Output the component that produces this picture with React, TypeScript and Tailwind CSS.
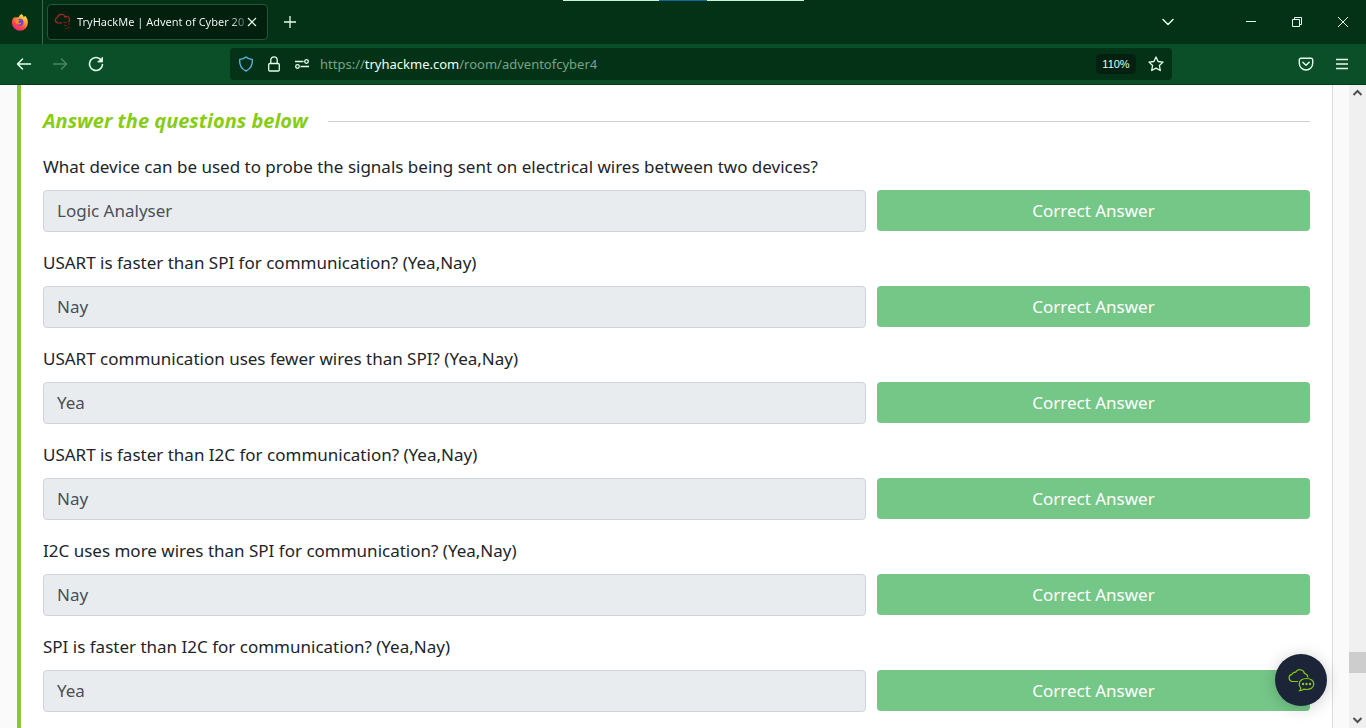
import { ChevronDown } from 'lucide-react';

const questions = [
  {
    text: 'What device can be used to probe the signals being sent on electrical wires between two devices?',
    answer: 'Logic Analyser',
  },
  { text: 'USART is faster than SPI for communication? (Yea,Nay)', answer: 'Nay' },
  { text: 'USART communication uses fewer wires than SPI? (Yea,Nay)', answer: 'Yea' },
  { text: 'USART is faster than I2C for communication? (Yea,Nay)', answer: 'Nay' },
  { text: 'I2C uses more wires than SPI for communication? (Yea,Nay)', answer: 'Nay' },
  { text: 'SPI is faster than I2C for communication? (Yea,Nay)', answer: 'Yea' },
];

function FirefoxLogo() {
  return (
    <svg width="18" height="18" viewBox="0 0 18 18" aria-hidden="true">
      <defs>
        <linearGradient id="flame" x1="0.8" y1="0" x2="0.2" y2="1">
          <stop offset="0" stopColor="#fff34f" />
          <stop offset="0.35" stopColor="#ffa22c" />
          <stop offset="0.65" stopColor="#ff4a45" />
          <stop offset="1" stopColor="#e3247f" />
        </linearGradient>
      </defs>
      <path
        d="M10.5 1c1.2 1 2 2 2.2 3 .7-.1 1.2-.8 1.3-1.2 2 2 3 4 2.8 7A7.9 7.9 0 0 1 1 10c-.1-2.2.4-4 1.6-5.6l.2 1 1.2-2 .6 1.5c1-.5 2-.6 3-.5C8 3 9 1.7 10.5 1z"
        fill="url(#flame)"
      />
      <circle cx="9" cy="9.3" r="3.5" fill="#7542d8" />
      <path d="M4.5 7c1.5-1 3-.8 4.5.4-1 .2-1.7.8-1.7 1.5 0 1.2 2 1.6 3.3.6-.3 2.2-4.6 3-5.8 0-.3-.8-.4-1.7-.3-2.5z" fill="#ff8a2c" />
    </svg>
  );
}

function CloudFavicon() {
  return (
    <svg width="18" height="18" viewBox="0 0 18 18" fill="none" stroke="#a42a28" strokeWidth="1.2" aria-hidden="true">
      <path d="M8 10H4a2.8 2.8 0 0 1-.4-5.5A3.8 3.8 0 0 1 11 4a3 3 0 0 1 4.5 3.3c-.2.7-.6 1.2-1.2 1.7" />
      <path d="M9.5 9.5h3M14 11h2M10 12.5h2.5M13.5 14.5h2M11 15.5h1.5" strokeWidth="1" stroke="#7a2320" />
    </svg>
  );
}

function TabBar() {
  return (
    <header className="relative flex h-11 items-center bg-[#033217] text-[#e6ffee]">
      {/* thin indicator strip on the top edge */}
      <div className="absolute left-[563px] top-0 flex h-px">
        <span className="w-24 bg-[#c9f5dc]" />
        <span className="w-12 bg-[#0f6b9c]" />
        <span className="w-[97px] bg-[#c9f5dc]" />
      </div>
      <div className="flex h-full w-[43px] items-center justify-center border-r border-[#3c6b4c] pr-[2px]">
        <FirefoxLogo />
      </div>
      <div className="ml-1 flex h-9 w-[221px] items-center rounded border border-[#1f5a38] bg-[#03200f] pl-[6px] pr-[10px]">
        <CloudFavicon />
        <span className="ml-[5px] flex-1 whitespace-nowrap bg-linear-to-r from-white from-90% to-white/20 bg-clip-text pt-px text-[11px] text-transparent">
          TryHackMe | Advent of Cyber 20
        </span>
        <button aria-label="Close tab">
          <svg width="10" height="10" viewBox="0 0 10 10" stroke="currentColor" strokeWidth="1.2">
            <path d="M1 1l8 8M9 1L1 9" />
          </svg>
        </button>
      </div>
      <button aria-label="New tab" className="ml-4">
        <svg width="12" height="12" viewBox="0 0 12 12" stroke="currentColor" strokeWidth="1.3">
          <path d="M6 0v12M0 6h12" />
        </svg>
      </button>
      <div className="ml-auto flex items-center pr-[18px]">
        <button aria-label="List all tabs" className="mr-[68px]">
          <ChevronDown size={20} strokeWidth={1.8} />
        </button>
        <button aria-label="Minimize" className="mr-9">
          <svg width="10" height="10" viewBox="0 0 10 10" stroke="currentColor">
            <path d="M0 4.5h10" />
          </svg>
        </button>
        <button aria-label="Restore" className="mr-9">
          <svg width="10" height="10" viewBox="0 0 10 10" fill="none" stroke="currentColor">
            <path d="M.5 2.5h7v7h-7zM2.5 2.5v-2h7v7h-2" />
          </svg>
        </button>
        <button aria-label="Close window">
          <svg width="10" height="10" viewBox="0 0 10 10" stroke="currentColor">
            <path d="M0 0l10 10M10 0L0 10" />
          </svg>
        </button>
      </div>
    </header>
  );
}

function Toolbar() {
  return (
    <nav className="flex h-[41px] items-center border-b border-[#053a1b] bg-[#0a4f28] px-4 text-[#e6ffee]">
      <div className="flex w-[214px] shrink-0 items-center gap-5">
        <button aria-label="Back">
          <svg width="16" height="16" viewBox="0 0 16 16" fill="none" stroke="currentColor" strokeWidth="1.5" strokeLinecap="round" strokeLinejoin="round">
            <path d="M14.5 8h-13M6.5 3L1.5 8l5 5" />
          </svg>
        </button>
        <button aria-label="Forward" className="text-[#4b8562]" disabled>
          <svg width="16" height="16" viewBox="0 0 16 16" fill="none" stroke="currentColor" strokeWidth="1.5" strokeLinecap="round" strokeLinejoin="round">
            <path d="M1.5 8h13M9.5 3l5 5-5 5" />
          </svg>
        </button>
        <button aria-label="Reload">
          <svg width="16" height="16" viewBox="0 0 16 16" fill="none" stroke="currentColor" strokeWidth="1.6" strokeLinecap="round">
            <path d="M13.5 4.5A6.5 6.5 0 1 0 14.5 8.5" />
            <path d="M14.5 1.5V6H10z" fill="currentColor" strokeWidth="0.8" />
          </svg>
        </button>
      </div>
      <div className="mr-[126px] flex h-8 flex-1 items-center rounded bg-[#033217] px-2">
        <svg width="16" height="16" viewBox="0 0 16 16" fill="none" stroke="#5fb0dd" strokeWidth="1.4" strokeLinejoin="round" aria-hidden="true">
          <path d="M8 1c1.5 1.4 3.7 2.2 6.3 2.4.5 5.2-1.5 9.4-6.3 11.6C3.2 12.8 1.2 8.6 1.7 3.4 4.3 3.2 6.5 2.4 8 1z" />
        </svg>
        <svg className="ml-3" width="16" height="16" viewBox="0 0 16 16" fill="none" stroke="currentColor" strokeWidth="1.3" aria-hidden="true">
          <rect x="2.7" y="7.5" width="10.6" height="7.5" rx="1.2" />
          <path d="M4.8 7.5V4a3.2 3.2 0 0 1 6.4 0v3.5" />
        </svg>
        <svg className="ml-3" width="16" height="16" viewBox="0 0 16 16" fill="none" stroke="currentColor" strokeWidth="1.3" aria-hidden="true">
          <path d="M1 5.5h8.5M6.5 10.5H15" />
          <circle cx="12.5" cy="5.5" r="1.8" />
          <circle cx="3.5" cy="10.5" r="1.8" />
        </svg>
        <a href="#top" className="ml-[10px] pt-[2px] text-[13px] text-[#79a387]">
          https://<span className="text-[#effff4]">tryhackme.com</span>/room/adventofcyber4
        </a>
        <button className="ml-auto h-5 w-10 rounded-sm bg-[#032010] text-center font-['Liberation_Sans'] text-[11px]">110%</button>
        <button aria-label="Bookmark this page" className="ml-3">
          <svg width="16" height="16" viewBox="0 0 16 16" fill="none" stroke="currentColor" strokeWidth="1.3" strokeLinejoin="round">
            <path d="M8 1l2.1 4.5 4.9.6-3.6 3.4.9 5L8 12.1l-4.3 2.4.9-5L1 6.1l4.9-.6z" />
          </svg>
        </button>
      </div>
      <button aria-label="Save to Pocket">
        <svg width="16" height="16" viewBox="0 0 16 16" fill="none" stroke="currentColor" strokeWidth="1.4" strokeLinecap="round" strokeLinejoin="round">
          <path d="M3 2.2h10A1.7 1.7 0 0 1 14.7 4v3.3a6.7 6.7 0 0 1-13.4 0V4A1.7 1.7 0 0 1 3 2.2z" />
          <path d="M4.8 6.3L8 9.3l3.2-3" />
        </svg>
      </button>
      <button aria-label="Menu" className="ml-5">
        <svg width="16" height="16" viewBox="0 0 16 16" stroke="currentColor" strokeWidth="1.3">
          <path d="M2 3.5h12M2 8h12M2 12.5h12" />
        </svg>
      </button>
    </nav>
  );
}

function Scrollbar() {
  return (
    <div className="flex w-[17px] shrink-0 flex-col items-center bg-[#f0f0f0] text-[#505050]">
      <svg width="17" height="17" viewBox="0 0 17 17" fill="none" stroke="currentColor" strokeWidth="2" aria-hidden="true">
        <path d="M4.5 10l4-4 4 4" />
      </svg>
      <div className="flex-1" />
      <div className="h-[21px] w-full bg-[#cdcdcd]" />
      <div className="h-[38px]" />
      <svg width="17" height="17" viewBox="0 0 17 17" fill="none" stroke="currentColor" strokeWidth="2" aria-hidden="true">
        <path d="M4.5 7l4 4 4-4" />
      </svg>
    </div>
  );
}

export default function App() {
  return (
    <div className="flex h-screen flex-col overflow-hidden bg-[#fafafa] font-['Noto_Sans',sans-serif]">
      <TabBar />
      <Toolbar />
      <div className="flex min-h-0 flex-1">
        <main className="ml-[17px] mr-4 min-w-0 flex-1 overflow-hidden border-l-4 border-r border-l-[#8cc63f] border-r-[#dcdcdc] bg-white px-[22px] pt-[22px]">
          <div className="mb-[18px] flex items-center gap-5">
            <h2 className="text-xl font-bold italic text-[#88cc14] font-['Open_Sans',sans-serif]">Answer the questions below</h2>
            <hr className="flex-1 border-[#cfcfcf]" />
          </div>
          {questions.map((q, i) => (
            <div key={q.text} className="mb-[17px]">
              <label htmlFor={`answer-${i}`} className="mb-[9px] block text-[17px] leading-7 text-[#212529]">
                {q.text}
              </label>
              <div className="grid grid-cols-[19fr_10fr] items-start gap-[11px]">
                <input
                  id={`answer-${i}`}
                  value={q.answer}
                  readOnly
                  className="h-[42px] w-full min-w-0 rounded border border-[#ced4da] bg-[#e9ecef] px-[13px] pb-[2px] text-[17px] text-[#495057]"
                />
                <button className="h-[41px] rounded bg-[#75c788] text-[17px] text-white">Correct Answer</button>
              </div>
            </div>
          ))}
        </main>
        <Scrollbar />
      </div>
      <button
        aria-label="Open chat"
        className="fixed bottom-[22px] right-[39px] flex size-[52px] items-center justify-center rounded-full bg-[#1c2538] shadow-[0_2px_16px_rgba(0,0,0,0.2)]"
      >
        <svg width="28" height="28" viewBox="0 0 28 28" fill="none" stroke="#88cc14" strokeWidth="1.2" strokeLinecap="round">
          <path d="M10.500 15.500H5.500a3.600 3.600 0 0 1-.6-7.100 3.500 3.500 0 0 1 3.700-2.200A4.800 4.800 0 0 1 17.500 7.500a3.800 3.800 0 0 1 3.300 3.500" />
          <path d="M19.500 12.500c4.200 0 7.300 2.300 7.300 5.500s-3.100 5.500-7.300 5.500c-1 0-1.900-.1-2.700-.4-1.100 1-2.500 1.500-4.100 1.500.9-.8 1.200-1.700 1.100-2.700-1-1-1.600-2.400-1.600-3.900 0-3.200 3.100-5.500 7.300-5.500z" />
          <g fill="#88cc14" stroke="none">
            <circle cx="16" cy="18" r="1.2" />
            <circle cx="19.5" cy="18" r="1.2" />
            <circle cx="23" cy="18" r="1.2" />
          </g>
        </svg>
      </button>
    </div>
  );
}
